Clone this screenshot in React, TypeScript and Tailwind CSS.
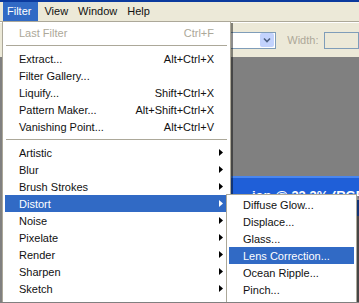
import React from "react";

type Item =
  | { sep: true }
  | { label: string; shortcut?: string; arrow?: boolean; active?: boolean; disabled?: boolean; sep?: false };

const filterItems: Item[] = [
  { label: "Last Filter", shortcut: "Ctrl+F", disabled: true },
  { sep: true },
  { label: "Extract...", shortcut: "Alt+Ctrl+X" },
  { label: "Filter Gallery..." },
  { label: "Liquify...", shortcut: "Shift+Ctrl+X" },
  { label: "Pattern Maker...", shortcut: "Alt+Shift+Ctrl+X" },
  { label: "Vanishing Point...", shortcut: "Alt+Ctrl+V" },
  { sep: true },
  { label: "Artistic", arrow: true },
  { label: "Blur", arrow: true },
  { label: "Brush Strokes", arrow: true },
  { label: "Distort", arrow: true, active: true },
  { label: "Noise", arrow: true },
  { label: "Pixelate", arrow: true },
  { label: "Render", arrow: true },
  { label: "Sharpen", arrow: true },
  { label: "Sketch", arrow: true },
  { label: "Stylize", arrow: true },
];

const distortItems: Item[] = [
  { label: "Diffuse Glow..." },
  { label: "Displace..." },
  { label: "Glass..." },
  { label: "Lens Correction...", active: true },
  { label: "Ocean Ripple..." },
  { label: "Pinch..." },
  { label: "Polar Coordinates..." },
];

function Arrow({ color }: { color: string }) {
  return (
    <svg width="4" height="7" viewBox="0 0 4 7" className="absolute right-[5px] top-[5px]">
      <polygon points="0,0 4,3.5 0,7" fill={color} />
    </svg>
  );
}

function MenuRow({ item }: { item: Item }) {
  if (item.sep) {
    return (
      <div className="flex h-[9px] items-center px-[1px]">
        <div className="h-px w-full bg-[#aca899]" />
      </div>
    );
  }
  const text = item.disabled ? "text-[#aca899]" : item.active ? "text-white" : "text-[#111]";
  return (
    <div
      className={`relative flex h-[17px] items-center whitespace-nowrap pl-[14px] pr-[14px] pt-px ${
        item.active ? "bg-[#316ac5]" : ""
      } ${text}`}
    >
      <span>{item.label}</span>
      {item.shortcut && <span className="ml-auto">{item.shortcut}</span>}
      {item.arrow && <Arrow color={item.active ? "#ffffff" : "#000000"} />}
    </div>
  );
}

export default function App() {
  return (
    <div
      className="relative flex h-[303px] w-[359px] flex-col overflow-hidden bg-[#7f7f7f] text-[11px] leading-[13px]"
      style={{ fontFamily: '"Liberation Sans", Arial, sans-serif' }}
    >
      {/* window title strip */}
      <div className="h-[2px] bg-[#0b3a9e]" />

      {/* menu bar */}
      <div className="flex h-[19px] items-stretch bg-[#ece9d8] pl-[3px] text-[#111]">
        <span className="flex items-center bg-[#316ac5] pl-[4px] pr-[7px] text-white">Filter</span>
        <div className="ml-[6px] flex items-center gap-[10px]">
          <span>View</span>
          <span>Window</span>
          <span>Help</span>
        </div>
      </div>
      <div className="h-px bg-[#aca899]" />
      <div className="h-px bg-white" />

      {/* options bar */}
      <div className="flex h-[34px] items-center bg-[#ece9d8] pl-[180px]">
        <div className="flex h-[17px] w-[112px] items-center justify-end border border-[#7f9db9] bg-white pr-px">
          <div className="flex h-[14px] w-[14px] items-center justify-center rounded-[2px] bg-[#c3d3fd]">
            <svg width="8" height="6" viewBox="0 0 8 6">
              <path d="M1 1.5 L4 4.5 L7 1.5" stroke="#4d6185" strokeWidth="1.6" fill="none" />
            </svg>
          </div>
        </div>
        <span className="ml-[11px] text-[#aca899]">Width:</span>
        <div className="ml-[6px] h-[17px] w-[40px] border border-[#7f9db9] bg-[#ece9d8]" />
      </div>

      {/* workspace with document window */}
      <div className="flex-1 bg-[#808080] pl-[228px] pt-[119px]">
        <div className="h-[40px] whitespace-nowrap border-t-2 border-[#4a86ee] bg-[#1f5fd8] pl-[24px] pt-[10px] text-[13px] font-bold leading-[15px] text-white">
          ion @ 33.3% (RGB/8)
        </div>
      </div>

      {/* Filter menu */}
      <div className="absolute left-[2px] top-[21px] w-[229px] border border-[#aca899] bg-white p-[2px] shadow-[2px_2px_0_rgba(0,0,0,0.45)]">
        {filterItems.map((item, i) => (
          <MenuRow key={i} item={item} />
        ))}
      </div>

      {/* Distort submenu */}
      <div className="absolute left-[226px] top-[194px] w-[131px] border border-[#aca899] bg-white px-[2px] pt-px shadow-[2px_2px_0_rgba(0,0,0,0.45)]">
        {distortItems.map((item, i) => (
          <MenuRow key={i} item={item} />
        ))}
      </div>

      {/* screenshot frame line */}
      <div className="absolute bottom-0 left-0 h-px w-full bg-[#808080]" />
    </div>
  );
}
